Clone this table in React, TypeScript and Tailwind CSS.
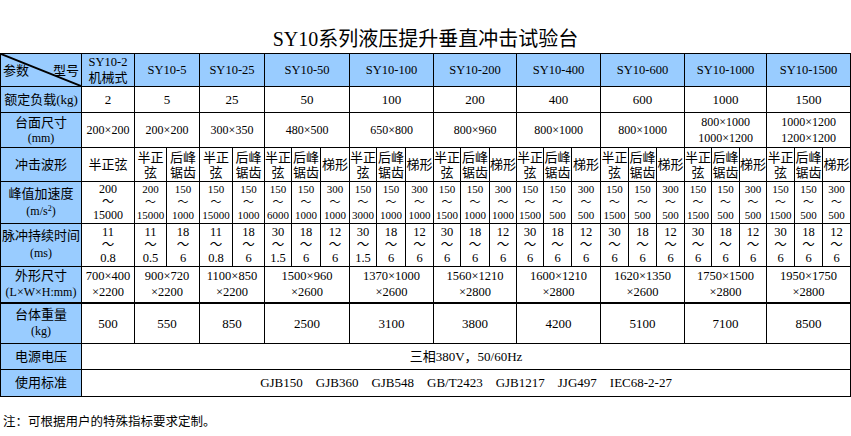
const colWidths = [81, 53, 32, 33, 33, 32, 27, 29, 29, 27, 29, 28, 27, 29, 27, 27, 28, 29, 28, 28, 28, 27, 28, 27, 28, 28, 28];

// each model covers 1, 2 or 3 sub columns
const models = [
  { name: "SY10-2", sub: "机械式", span: 1 },
  { name: "SY10-5", span: 2 },
  { name: "SY10-25", span: 2 },
  { name: "SY10-50", span: 3 },
  { name: "SY10-100", span: 3 },
  { name: "SY10-200", span: 3 },
  { name: "SY10-400", span: 3 },
  { name: "SY10-600", span: 3 },
  { name: "SY10-1000", span: 3 },
  { name: "SY10-1500", span: 3 },
];

const loads = ["2", "5", "25", "50", "100", "200", "400", "600", "1000", "1500"];

const tables = [
  ["200×200"],
  ["200×200"],
  ["300×350"],
  ["480×500"],
  ["650×800"],
  ["800×960"],
  ["800×1000"],
  ["800×1000"],
  ["800×1000", "1000×1200"],
  ["1000×1200", "1200×1200"],
];

const late = [["150", "1500"], ["150", "500"], ["300", "500"]];
const accel = [
  [["200", "15000"]],
  [["200", "15000"], ["150", "1000"]],
  [["150", "15000"], ["150", "1000"]],
  [["150", "6000"], ["150", "1000"], ["300", "1000"]],
  [["150", "3000"], ["150", "1000"], ["300", "1000"]],
  [["150", "1500"], ["150", "1000"], ["300", "1000"]],
  late,
  late,
  late,
  late,
];

const tail = [["30", "6"], ["18", "6"], ["12", "6"]];
const pulse = [
  [["11", "0.8"]],
  [["11", "0.5"], ["18", "6"]],
  [["11", "0.8"], ["18", "6"]],
  [["30", "1.5"], ["18", "6"], ["12", "6"]],
  [["30", "1.5"], ["18", "6"], ["12", "6"]],
  tail,
  tail,
  tail,
  tail,
  tail,
];

const sizes = [
  ["700×400", "×2200"],
  ["900×720", "×2200"],
  ["1100×850", "×2200"],
  ["1500×960", "×2600"],
  ["1370×1000", "×2600"],
  ["1560×1210", "×2800"],
  ["1600×1210", "×2800"],
  ["1620×1350", "×2600"],
  ["1750×1500", "×2800"],
  ["1950×1750", "×2800"],
];

const weights = ["500", "550", "850", "2500", "3100", "3800", "4200", "5100", "7100", "8500"];

const standards = ["GJB150", "GJB360", "GJB548", "GB/T2423", "GJB1217", "JJG497", "IEC68-2-27"];

const cell = "border border-black p-0 text-center align-middle";
const label = `${cell} bg-[#99ccff] text-[13px] leading-[16px]`;

function Stack({ top, bottom, size }: { top: string; bottom: string; size: string }) {
  return (
    <div className={`flex flex-col items-center leading-[13px] ${size}`}>
      <span>{top}</span>
      <span>～</span>
      <span>{bottom}</span>
    </div>
  );
}

export default function App() {
  return (
    <div
      className="w-[851px] h-[436px] bg-white text-black"
      style={{ fontFamily: '"Liberation Serif", "Noto Sans CJK SC", serif' }}
    >
      <div className="h-[53px] flex items-end justify-center pb-[2px] text-[20px] leading-[24px]">
        SY10系列液压提升垂直冲击试验台
      </div>

      <table className="table-fixed border-collapse w-[851px]">
        <colgroup>
          {colWidths.map((w, i) => (
            <col key={i} style={{ width: w }} />
          ))}
        </colgroup>
        <tbody>
          <tr className="h-[33px]">
            <td className={`${label} relative`}>
              <svg className="absolute inset-0 w-full h-full" viewBox="0 0 80 33" preserveAspectRatio="none">
                <line x1="0" y1="0" x2="80" y2="33" stroke="black" strokeWidth="2" />
              </svg>
              <div className="relative flex justify-between items-center px-[2px] pt-[2px]">
                <span>参数</span>
                <span>型号</span>
              </div>
            </td>
            {models.map((m) => (
              <td key={m.name} colSpan={m.span} className={`${cell} bg-[#99ccff] text-[12.5px] leading-[15px]`}>
                {m.name}
                {m.sub && <div className="text-[13px]">{m.sub}</div>}
              </td>
            ))}
          </tr>

          <tr className="h-[26px]">
            <td className={label}>额定负载(kg)</td>
            {loads.map((v, i) => (
              <td key={i} colSpan={models[i].span} className={`${cell} text-[13px]`}>
                {v}
              </td>
            ))}
          </tr>

          <tr className="h-[35px]">
            <td className={label}>
              台面尺寸
              <div className="text-[12px] leading-[15px]">(mm)</div>
            </td>
            {tables.map((lines, i) => (
              <td key={i} colSpan={models[i].span} className={`${cell} text-[12px] leading-[16px]`}>
                {lines.map((l) => (
                  <div key={l}>{l}</div>
                ))}
              </td>
            ))}
          </tr>

          <tr className="h-[34px]">
            <td className={label}>冲击波形</td>
            <td className={`${cell} text-[13px]`}>半正弦</td>
            {models.slice(1).map((m) =>
              ["半正弦", "后峰锯齿", "梯形"].slice(0, m.span).map((w) => (
                <td key={m.name + w} className={`${cell} text-[13px] leading-[15px]`}>
                  {w === "半正弦" ? (
                    <>
                      半正<br />弦
                    </>
                  ) : w === "后峰锯齿" ? (
                    <>
                      后峰<br />锯齿
                    </>
                  ) : (
                    w
                  )}
                </td>
              ))
            )}
          </tr>

          <tr className="h-[42px]">
            <td className={label}>
              峰值加速度
              <div className="text-[12px] leading-[18px]">
                (m/s<sup className="text-[8px]">2</sup>)
              </div>
            </td>
            {accel.map((group, i) =>
              group.map(([a, b], j) => (
                <td key={`${i}-${j}`} className={cell}>
                  <Stack top={a} bottom={b} size={i === 0 ? "text-[12px]" : "text-[11px]"} />
                </td>
              ))
            )}
          </tr>

          <tr className="h-[43px]">
            <td className={label}>
              脉冲持续时间
              <div className="text-[12px] leading-[18px]">(ms)</div>
            </td>
            {pulse.map((group, i) =>
              group.map(([a, b], j) => (
                <td key={`${i}-${j}`} className={cell}>
                  <Stack top={a} bottom={b} size="text-[12.5px]" />
                </td>
              ))
            )}
          </tr>

          <tr className="h-[36px] border-b-2 border-black">
            <td className={`${label} border-b-2`}>
              外形尺寸
              <div className="text-[12px]">(L×W×H:mm)</div>
            </td>
            {sizes.map(([a, b], i) => (
              <td key={i} colSpan={models[i].span} className={`${cell} border-b-2 text-[12.5px] leading-[16px]`}>
                <div>{a}</div>
                <div>{b}</div>
              </td>
            ))}
          </tr>

          <tr className="h-[41px]">
            <td className={label}>
              台体重量
              <div className="text-[12px]">(kg)</div>
            </td>
            {weights.map((v, i) => (
              <td key={i} colSpan={models[i].span} className={`${cell} text-[13px]`}>
                {v}
              </td>
            ))}
          </tr>

          <tr className="h-[26px]">
            <td className={label}>电源电压</td>
            <td colSpan={26} className={`${cell} text-[13px]`}>
              三相380V，50/60Hz
            </td>
          </tr>

          <tr className="h-[27px]">
            <td className={label}>使用标准</td>
            <td colSpan={26} className={`${cell} text-[13px]`}>
              <div className="flex justify-center gap-[13px]">
                {standards.map((s) => (
                  <span key={s}>{s}</span>
                ))}
              </div>
            </td>
          </tr>
        </tbody>
      </table>

      <p className="mt-[17px] pl-[3px] text-[12.5px] leading-[16px]">注：可根据用户的特殊指标要求定制。</p>
    </div>
  );
}
